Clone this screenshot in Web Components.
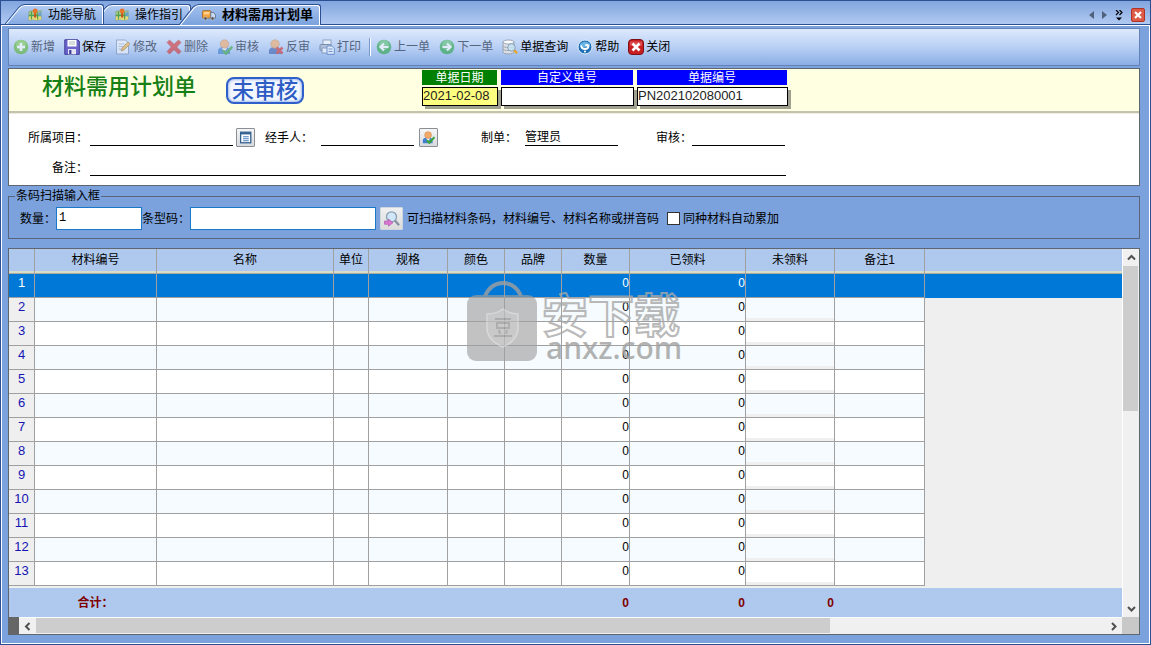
<!DOCTYPE html>
<html lang="zh-CN">
<head>
<meta charset="utf-8">
<title>材料需用计划单</title>
<style>
  body { margin: 0; font: 12px/18px "Liberation Sans", "Noto Sans CJK SC", sans-serif; color: #000; }
</style>
</head>
<body>
<plan-app></plan-app>
<script>
const ICONS = {
  map: '<path d="M1 4l5-1 4 1 5-1v10l-5 1-4-1-5 1z" fill="#a9c98a" stroke="#6d9a5a" stroke-width=".6"/><path d="M1 10h14v3l-5 1-4-1-5 1z" fill="#e8d878"/><path d="M4 4v9M11 5v8M1 8.500h14" stroke="#4fa04f" stroke-width="1.300"/><path d="M12 5h3v4h-3z" fill="#6aa0d8"/><path d="M7 5h2.400v6H7z" fill="#c2571c"/><circle cx="8.200" cy="3.500" r="2.800" fill="#e8742a"/>',
  truck: '<rect x="0.5" y="3" width="9.500" height="8.500" rx="1" fill="#f6a23c" stroke="#9c6a2c"/><rect x="2" y="4.500" width="6.500" height="3" fill="#ffd08a"/><path d="M10 5h3.200l2.300 3v3.500H10z" fill="#c9dcf2" stroke="#5c6f8c"/><circle cx="4" cy="12" r="1.900" fill="#555" stroke="#ddd" stroke-width=".6"/><circle cx="12" cy="12" r="1.900" fill="#555" stroke="#ddd" stroke-width=".6"/>',
  add: '<circle cx="8" cy="8" r="7.300" fill="#5cb531"/><circle cx="8" cy="6" r="5" fill="#8bd15d" opacity=".7"/><path d="M8 4v8M4 8h8" stroke="#fff" stroke-width="2.600"/>',
  save: '<path d="M.8.8h13l1.500 1.500v13H.8z" fill="#6b64cc" stroke="#3f3a93"/><rect x="3.500" y="1" width="9" height="6.500" fill="#fff"/><path d="M5 3h6M5 5h6" stroke="#9aa" stroke-width=".8"/><rect x="4" y="10" width="8" height="5.300" fill="#e4e4f4"/><rect x="5.200" y="11" width="2.200" height="4" fill="#3f3a93"/>',
  edit: '<path d="M1.500 1h9l3 3v11h-12z" fill="#f4f6fb" stroke="#7a8eb4"/><path d="M3.500 5h6M3.500 7.500h5M3.500 10h3" stroke="#a3b2cf"/><path d="M6 12l1-3 6-6 2 2-6 6z" fill="#f1b440" stroke="#a06d22" stroke-width=".7"/>',
  del: '<path d="M3.500 1L8 5.300 12.500 1 15 3.500 10.700 8 15 12.500 12.500 15 8 10.700 3.500 15 1 12.500 5.300 8 1 3.500z" fill="#d8322f" stroke="#a82725" stroke-width=".6"/>',
  check: '<path d="M1 15V11q1-3 6-3t6 3v4z" fill="#3f7fce"/><path d="M5 9l2.500 4L10 9z" fill="#fff"/><circle cx="7.500" cy="5" r="4.200" fill="#f3a968" stroke="#c57f3e" stroke-width=".6"/><path d="M6 11.500l3 3 6.300-7" fill="none" stroke="#3ca53c" stroke-width="2.600"/>',
  uncheck: '<path d="M1 15V11q1-3 6-3t6 3v4z" fill="#3f62b0"/><circle cx="7" cy="5" r="4.200" fill="#f3a968" stroke="#c57f3e" stroke-width=".6"/><path d="M8.500 8.500l6 6M14.500 8.500l-6 6" stroke="#d43030" stroke-width="2.600"/>',
  print: '<rect x="4" y="1" width="8" height="5" fill="#fff" stroke="#6d7f9e"/><rect x="1" y="5.500" width="11" height="6" rx="1" fill="#a9b6cc" stroke="#51617e"/><rect x="3" y="9" width="6" height="5" fill="#fff" stroke="#6d7f9e"/><path d="M8 7h5l2.300 2v6.300H8z" fill="#fff" stroke="#3f6db8"/><path d="M9.500 10h4M9.500 12.500h4" stroke="#3f6db8"/>',
  prev: '<circle cx="8" cy="8" r="7.300" fill="#2aa545"/><circle cx="8" cy="6" r="5" fill="#7ccf8f" opacity=".6"/><path d="M12.500 8H5M8 4.500L4.500 8 8 11.500" fill="none" stroke="#fff" stroke-width="2.200"/>',
  next: '<circle cx="8" cy="8" r="7.300" fill="#2aa545"/><circle cx="8" cy="6" r="5" fill="#7ccf8f" opacity=".6"/><path d="M3.500 8H11M8 4.500L11.500 8 8 11.500" fill="none" stroke="#fff" stroke-width="2.200"/>',
  query: '<path d="M1 3v10c0 2.500 11 2.500 11 0V3z" fill="#dce0e6" stroke="#8d97a6" stroke-width=".8"/><ellipse cx="6.500" cy="3" rx="5.500" ry="2" fill="#f7f9fc" stroke="#8d97a6" stroke-width=".8"/><path d="M1 7c0 2 11 2 11 0M1 10c0 2 11 2 11 0" fill="none" stroke="#8d97a6" stroke-width=".8"/><circle cx="9.500" cy="8.500" r="3.800" fill="#c4e4f4" fill-opacity=".8" stroke="#8aa4b8"/><path d="M12.300 11.300l2.700 3" stroke="#e8a52c" stroke-width="2.400"/>',
  help: '<circle cx="8" cy="8" r="7" fill="#1c6fb4" stroke="#dfeefa"/><path d="M3 5q5-5 10 0v2q-5 3-10 0z" fill="#7fc4ee" opacity=".8"/><path d="M4 6.500q.5 3.500 4 3.500t3.500-3Q10.500 5 8.300 6.600" fill="none" stroke="#fff" stroke-width="1.800"/><circle cx="8" cy="12.500" r="1.100" fill="#fff"/>',
  close: '<rect x=".5" y=".5" width="15" height="15" rx="3.500" fill="#c81f22" stroke="#7d1012"/><path d="M2 2.500h12v4q-6 2-12 0z" fill="#e8696a" opacity=".6"/><path d="M4.500 4.500l7 7M11.500 4.500l-7 7" stroke="#fff" stroke-width="2.600"/>',
  list: '<rect x="2" y="1.500" width="12.500" height="13" fill="#fff" stroke="#33608f" stroke-width="1.600"/><path d="M2 3h12.500" stroke="#33608f" stroke-width="2.400"/><path d="M5 7h7M5 9.500h7M5 12h7" stroke="#4a7fc0" stroke-width="1.300"/>',
  find: '<circle cx="7.500" cy="5.800" r="5" fill="#cfe7f8" stroke="#8aa0b4" stroke-width="1.300"/><path d="M11 9.500l4 4.700" stroke="#8592a0" stroke-width="2.400"/><path d="M.5 10h4V8l4.500 3.700L4.500 15.300v-2h-4z" fill="#d878d0" stroke="#a64fa8" stroke-width=".6"/>'
};

/* Registers an element whose shadow root is filled from a template function. */
function define(name, view, after) {
  customElements.define(name, class extends HTMLElement {
    connectedCallback() {
      if (this.shadowRoot) return;
      const t = document.createElement('template');
      t.innerHTML = view(this);
      this.attachShadow({ mode: 'open' }).append(t.content.cloneNode(true));
      if (after) after(this.shadowRoot, this);
    }
  });
}

define('app-icon', el => `
  <style>:host{display:block;flex:none;width:16px;height:16px} svg{display:block;width:100%;height:100%}</style>
  <svg viewBox="0 0 16 16" aria-hidden="true">${ICONS[el.getAttribute('name')]}</svg>`);

define('tab-item', el => `
  <style>
    :host{display:block;position:relative;margin-left:-12px;z-index:1}
    :host(:first-child){margin-left:0;z-index:2}
    :host([active]){z-index:3}
    button{display:flex;height:20px;padding:0;border:0;background:none;font:inherit;color:inherit}
    svg{display:block;width:20px;height:20px}
    .face{display:flex;align-items:center;gap:6px;box-sizing:border-box;height:20px;padding:0 7px 0 3px;
      border-top:1px solid #2c4f94;border-right:1px solid #2c4f94;border-radius:0 3px 0 0;
      box-shadow:inset -1px 1px #fff;background:linear-gradient(#b4cdf2,#86aae3)}
    app-icon{width:14px;height:14px}
    :host([active]) button{height:21px;font-weight:bold;font-size:13px}
    :host([active]) .face,:host([active]) svg{height:21px}
    :host([active]) .face{background:linear-gradient(#a6c3ef,#7ba2dd)}
  </style>
  <button type="button" role="tab" aria-selected="${el.hasAttribute('active')}">
    <svg viewBox="0 0 20 20" preserveAspectRatio="none" aria-hidden="true">
      <defs><linearGradient id="g" x2="0" y2="1"><stop stop-color="${el.hasAttribute('active') ? '#a6c3ef' : '#b4cdf2'}"/><stop offset="1" stop-color="${el.hasAttribute('active') ? '#7ba2dd' : '#86aae3'}"/></linearGradient></defs>
      <path d="M0 20L14 3Q17 0 20 0V20z" fill="url(#g)"/>
      <path d="M1 20.500L15 4Q17.500 1.500 20 1.500" fill="none" stroke="#fff"/>
      <path d="M0 20L14 3Q16.500.5 20 .5" fill="none" stroke="#2c4f94"/>
    </svg>
    <span class="face"><app-icon name="${el.getAttribute('icon')}"></app-icon><slot></slot></span>
  </button>`);

define('tab-strip', () => `
  <style>
    :host{display:flex;align-items:flex-end;justify-content:space-between;height:24px;padding:0 5px 0 4px;
      border-bottom:1px solid #fff;background:linear-gradient(#81a5de,#b3cbf2);box-shadow:inset 0 -1px #2c4f94}
    .tabs,.tools{display:flex}
    .tools{align-items:center;gap:8px;height:20px}
    .tools button{display:block;padding:0;border:0;background:none}
    svg{display:block}
  </style>
  <div class="tabs" role="tablist">
    <tab-item icon="map">功能导航</tab-item><tab-item icon="map">操作指引</tab-item><tab-item icon="truck" active>材料需用计划单</tab-item>
  </div>
  <div class="tools">
    <button type="button" aria-label="向左"><svg width="5" height="8"><path d="M5 0v8L0 4z" fill="#50617d"/></svg></button>
    <button type="button" aria-label="向右"><svg width="5" height="8"><path d="M0 0v8l5-4z" fill="#50617d"/></svg></button>
    <button type="button" aria-label="更多"><svg width="8" height="11"><path d="M1 0l2.500 2.500L1 5M4.500 0L7 2.500 4.500 5" fill="none" stroke="#000" stroke-width="1.200"/><path d="M1 7.500h6L4 10.500z"/></svg></button>
    <button type="button" aria-label="关闭"><svg width="14" height="14"><rect x=".5" y=".5" width="13" height="13" rx="1.500" fill="#dc5a46" stroke="#b23326"/><path d="M4 4l6 6M10 4l-6 6" stroke="#fff" stroke-width="2.200"/></svg></button>
  </div>`);

define('tool-button', el => `
  <style>
    :host{display:block}
    button{display:flex;align-items:center;gap:2px;padding:0;border:0;background:none;font:inherit;color:#000}
    button:disabled{color:#56657f} button:disabled app-icon{opacity:.6}
  </style>
  <button type="button" ${el.hasAttribute('disabled') ? 'disabled' : ''}><app-icon name="${el.getAttribute('icon')}"></app-icon><slot></slot></button>`);

define('tool-bar', () => `
  <style>
    :host{display:flex;align-items:center;gap:9px;height:36px;padding:0 4px;border:1px solid #6482b8;
      background:linear-gradient(#dde9fc,#b9d0f5 50%,#8aaee5)}
    i{width:1px;height:18px;margin:0 -2px 0 0;background:#fff;box-shadow:-1px 0 #7a97c8}
    i+tool-button{margin-left:-2px}
  </style>
  <tool-button icon="add" disabled>新增</tool-button><tool-button icon="save">保存</tool-button>
  <tool-button icon="edit" disabled>修改</tool-button><tool-button icon="del" disabled>删除</tool-button>
  <tool-button icon="check" disabled>审核</tool-button><tool-button icon="uncheck" disabled>反审</tool-button>
  <tool-button icon="print" disabled>打印</tool-button><i></i>
  <tool-button icon="prev" disabled>上一单</tool-button><tool-button icon="next" disabled>下一单</tool-button>
  <tool-button icon="query">单据查询</tool-button><tool-button icon="help">帮助</tool-button><tool-button icon="close">关闭</tool-button>`);

define('head-field', el => `
  <style>
    :host{display:block;--tint:#0000ff}
    :host([accent]){--tint:#008000}
    label{display:block;height:15px;margin:0 1px 2px 0;line-height:16px;text-align:center;color:#fff;background:var(--tint)}
    input{display:block;box-sizing:border-box;width:100%;height:19px;padding:0 0 2px;border:1px solid #000;border-radius:0;
      font:inherit;font-size:13px;box-shadow:3px 3px #a0a090;background:#fff;color:#222}
    :host([accent]) input{background:#ffff80}
  </style>
  <label for="v">${el.getAttribute('label')}</label><input id="v" value="${el.getAttribute('value') || ''}">`);

define('line-field', el => `
  <style>
    :host{display:flex;gap:var(--gap,2px)}
    label{flex:none;line-height:20px;height:18px}
    input{box-sizing:border-box;flex:1;min-width:0;height:18px;padding:0;border:0;border-bottom:1px solid #000;background:none;font:inherit}
  </style>
  <label for="v">${el.getAttribute('label')}：</label><input id="v" value="${el.getAttribute('value') || ''}">`);

define('pick-button', el => `
  <style>
    :host{display:block;--size:19px}
    button{display:grid;place-items:center;box-sizing:border-box;width:var(--size);height:var(--size);padding:0;border:1px solid #8a8f96;border-radius:1px;background:linear-gradient(#f6f6f6,#d8dade)}
    app-icon{width:13px;height:13px}
    :host([large]){--size:23px}
    :host([large]) button{border-color:#cfd6e0;background:linear-gradient(#f0f0f0,#dcdcdc)}
    :host([large]) app-icon{width:16px;height:16px}
  </style>
  <button type="button" aria-label="${el.getAttribute('label')}"><app-icon name="${el.getAttribute('icon')}"></app-icon></button>`);

define('plan-form', () => `
  <style>
    :host{display:block;border:1px solid #5f6670;background:#fff}
    header{display:flex;align-items:flex-start;height:42px;padding:0 0 0 33px;border-bottom:2px solid #c4c4ae;background:#ffffe1;box-shadow:0 1px #eeeee0}
    h1{margin:4px 0 0;font-size:22px;line-height:28px;font-weight:500;color:#168016}
    .stamp{box-sizing:border-box;width:78px;height:27px;margin:8px 118px 0 30px;border:2px solid #2f5fc8;border-radius:8px;
      box-shadow:inset 0 0 3px #5c86dc;background:#f2f6ff;color:#2c5cc4;font-size:22px;line-height:23px;font-weight:500;text-align:center}
    .codes{display:grid;grid-template-columns:76px 133px 151px;gap:2px 3px;padding-top:1px}
    .rows{display:grid;gap:12px;padding:15px 0 9px 19px}
    .row{display:flex;align-items:center;height:18px}
    .project{width:205px;margin-right:3px}
    .person{--gap:8px;width:149px;margin:0 5px 0 10px}
    .maker{--gap:8px;width:137px;margin:0 38px 0 43px}
    .auditor{--gap:0px;width:129px}
    .note{width:734px;margin-left:24px}
  </style>
  <header>
    <h1>材料需用计划单</h1><div class="stamp">未审核</div>
    <div class="codes">
      <head-field accent label="单据日期" value="2021-02-08"></head-field>
      <head-field label="自定义单号"></head-field>
      <head-field label="单据编号" value="PN202102080001"></head-field>
    </div>
  </header>
  <div class="rows">
    <div class="row">
      <line-field class="project" label="所属项目"></line-field><pick-button icon="list" label="选择项目"></pick-button>
      <line-field class="person" label="经手人"></line-field><pick-button icon="check" label="选择经手人"></pick-button>
      <line-field class="maker" label="制单" value="管理员"></line-field>
      <line-field class="auditor" label="审核"></line-field>
    </div>
    <div class="row"><line-field class="note" label="备注"></line-field></div>
  </div>`);

define('barcode-bar', () => `
  <style>
    :host{display:block}
    fieldset{min-width:0;margin:0;padding:0 0 8px 11px;border:1px solid #57647c}
    legend{margin-left:-5px;padding:0 1px;line-height:14px}
    .row{display:flex;align-items:center;margin-top:4px}
    input[type=text]{box-sizing:border-box;height:23px;padding:0 2px 2px;border:1px solid #1b78c8;background:#fff;font:12px "Liberation Mono",monospace}
    #qty{width:86px} #code{width:186px;margin-right:4px}
    p{margin:0 8px 0 4px}
    #sum{appearance:none;box-sizing:border-box;width:13px;height:13px;margin:0 3px 0 0;border:1px solid #333;background:#fff}
  </style>
  <fieldset>
    <legend>条码扫描输入框</legend>
    <div class="row">
      <label for="qty">数量：</label><input type="text" id="qty" value="1">
      <label for="code">条型码：</label><input type="text" id="code">
      <pick-button large icon="find" label="查找"></pick-button>
      <p>可扫描材料条码，材料编号、材料名称或拼音码</p>
      <input type="checkbox" id="sum"><label for="sum">同种材料自动累加</label>
    </div>
  </fieldset>`);

define('scroll-bar', el => {
  const v = el.hasAttribute('vertical');
  const arrow = d => `<svg width="9" height="9" aria-hidden="true"><path d="${d}" fill="none" stroke="#505050" stroke-width="2"/></svg>`;
  return `
  <style>
    :host{display:flex;background:#f0f0f0}
    :host([vertical]){flex-direction:column;box-sizing:border-box;width:17px;border-left:1px solid #fff}
    :host(:not([vertical])){box-sizing:border-box;height:17px;border-top:1px solid #fff}
    button{display:grid;place-items:center;flex:none;width:17px;height:16px;padding:0;border:0;background:none}
    :host([vertical]) button{width:16px;height:17px}
    .track{flex:1;display:flex;flex-direction:inherit}
    .thumb{background:#cdcdcd}
    :host([vertical]) .thumb{width:15px;height:var(--thumb)}
    :host(:not([vertical])) .thumb{width:var(--thumb);height:15px}
  </style>
  <button type="button" aria-label="${v ? '向上' : '向左'}">${arrow(v ? 'M1 6.500L4.500 3 8 6.500' : 'M6.500 1L3 4.500 6.500 8')}</button>
  <div class="track"><div class="thumb"></div></div>
  <button type="button" aria-label="${v ? '向下' : '向右'}">${arrow(v ? 'M1 3L4.500 6.500 8 3' : 'M3 1l3.500 3.500L3 8')}</button>`;
});

define('water-mark', () => `
  <style>
    :host{display:flex;gap:4px;pointer-events:none;color:#a0a0a0;opacity:.8}
    svg{display:block;flex:none}
    .words{padding-top:10px}
    .cn{font-size:46px;line-height:50px;font-weight:bold;color:transparent;-webkit-text-stroke:2px #a8a8a8}
    .en{padding-left:4px;margin-top:-6px;font:500 30px/26px "Noto Sans",sans-serif}
  </style>
  <svg width="71" height="80" viewBox="0 0 71 80" aria-hidden="true">
    <path d="M18 15Q24 2 36 2T54 15" fill="none" stroke="#a0a0a0" stroke-width="4"/>
    <rect y="14" width="70" height="66" rx="9" fill="#a0a0a0" fill-opacity=".8"/>
    <path d="M36 28q7 5 15 5v14q0 12-15 19Q20 59 20 47V33q9 0 16-5z" fill="#bcbcbc" stroke="#d0d0d0" stroke-width="1.500"/>
    <path d="M28 38h16M30 42h12v5H30zM32 49l1 4M40 49l-1 4M27 55h18" fill="none" stroke="#9a9a9a" stroke-width="2"/>
  </svg>
  <div class="words"><div class="cn">安下载</div><div class="en">anxz.com</div></div>`);

define('plan-grid', () => `
  <style>
    :host{display:grid;grid-template-columns:minmax(0,1fr) auto;position:relative;border:1px solid #5f6670;background:#efefef}
    table{width:100%;table-layout:fixed;border-collapse:separate;border-spacing:0}
    th,td{box-sizing:border-box;padding:0;border-right:1px solid #a0a0a0;overflow:hidden;font-weight:normal}
    thead th{height:25px;padding-bottom:3px;border-bottom:1px solid #a9a99c;background:linear-gradient(#aec9ed 22px,#dcdccb 22px)}
    tbody th,tbody td{height:24px;border-bottom:1px solid #a0a0a0;vertical-align:top;background:#fff}
    tbody td{text-align:right}
    tbody th{font-size:13px;color:#1414b4;background:#efefef}
    tbody tr:nth-child(even) td{background:#f5fbff}
    tbody td.open{background:linear-gradient(#fff 20px,#efefef 20px) !important}
    tbody tr:nth-child(even) td.open{background:linear-gradient(#f5fbff 20px,#efefef 20px) !important}
    tbody tr .rest{border:0;background:#efefef !important}
    tbody tr:first-child>*{background:#0078d7 !important;color:#fff}
    .rest{border-right:0}
    tfoot td{height:31px;padding-right:1px;border:0;border-top:2px solid #efefef;background:#aec9ed;color:#800000;font-weight:bold;font-size:12px;text-align:right}
    tfoot td.sum{text-align:center}
    .bottom{display:flex}
    .bottom i{width:10px;background:#666}
    .bottom scroll-bar{flex:1;--thumb:794px}
    .side{--thumb:145px}
    .corner{background:#c8c8c8}
    water-mark{position:absolute;left:458px;top:32px}
  </style>
  <table>
    <colgroup></colgroup>
    <thead><tr></tr></thead><tbody></tbody><tfoot><tr></tr></tfoot>
  </table>
  <scroll-bar class="side" vertical></scroll-bar>
  <div class="bottom"><i></i><scroll-bar></scroll-bar></div>
  <div class="corner"></div>
  <water-mark></water-mark>`,
  root => {
    const cols = [['', 26], ['材料编号', 122], ['名称', 177], ['单位', 35], ['规格', 79], ['颜色', 57], ['品牌', 57],
      ['数量', 68], ['已领料', 116], ['未领料', 89], ['备注1', 90], ['', 0]];
    const last = cols.length - 1;
    root.querySelector('colgroup').innerHTML = cols.map(c => c[1] ? `<col style="width:${c[1]}px">` : '<col>').join('');
    root.querySelector('thead tr').innerHTML = cols.map(c => `<th scope="col">${c[0]}</th>`).join('');
    root.querySelector('thead th:last-child').className = 'rest';
    const cell = i => `<td class="${i === last ? 'rest' : i === 9 ? 'open' : ''}">${i === 7 || i === 8 ? '0' : ''}</td>`;
    root.querySelector('tbody').innerHTML = Array.from({ length: 13 }, (_, r) =>
      `<tr><th scope="row">${r + 1}</th>${cols.slice(1).map((c, i) => cell(i + 1)).join('')}</tr>`).join('');
    root.querySelector('tfoot tr').innerHTML = cols.map((c, i) =>
      `<td class="${i === 1 ? 'sum' : ''}">${i === 1 ? '合计：' : i > 6 && i < 10 ? '0' : ''}</td>`).join('');
  });

define('plan-app', () => `
  <style>
    :host{display:flex;flex-direction:column;box-sizing:border-box;min-height:100vh;border:1px solid #2c4f94;background:#7ba2dd}
    main{flex:1;display:flex;flex-direction:column;padding:2px 9px 8px 6px;border:solid #fff;border-width:0 1px 1px}
    plan-form{margin-top:2px}
    barcode-bar{margin:3px 0 9px}
  </style>
  <tab-strip></tab-strip>
  <main><tool-bar></tool-bar><plan-form></plan-form><barcode-bar></barcode-bar><plan-grid></plan-grid></main>`);
</script>
</body>
</html>
